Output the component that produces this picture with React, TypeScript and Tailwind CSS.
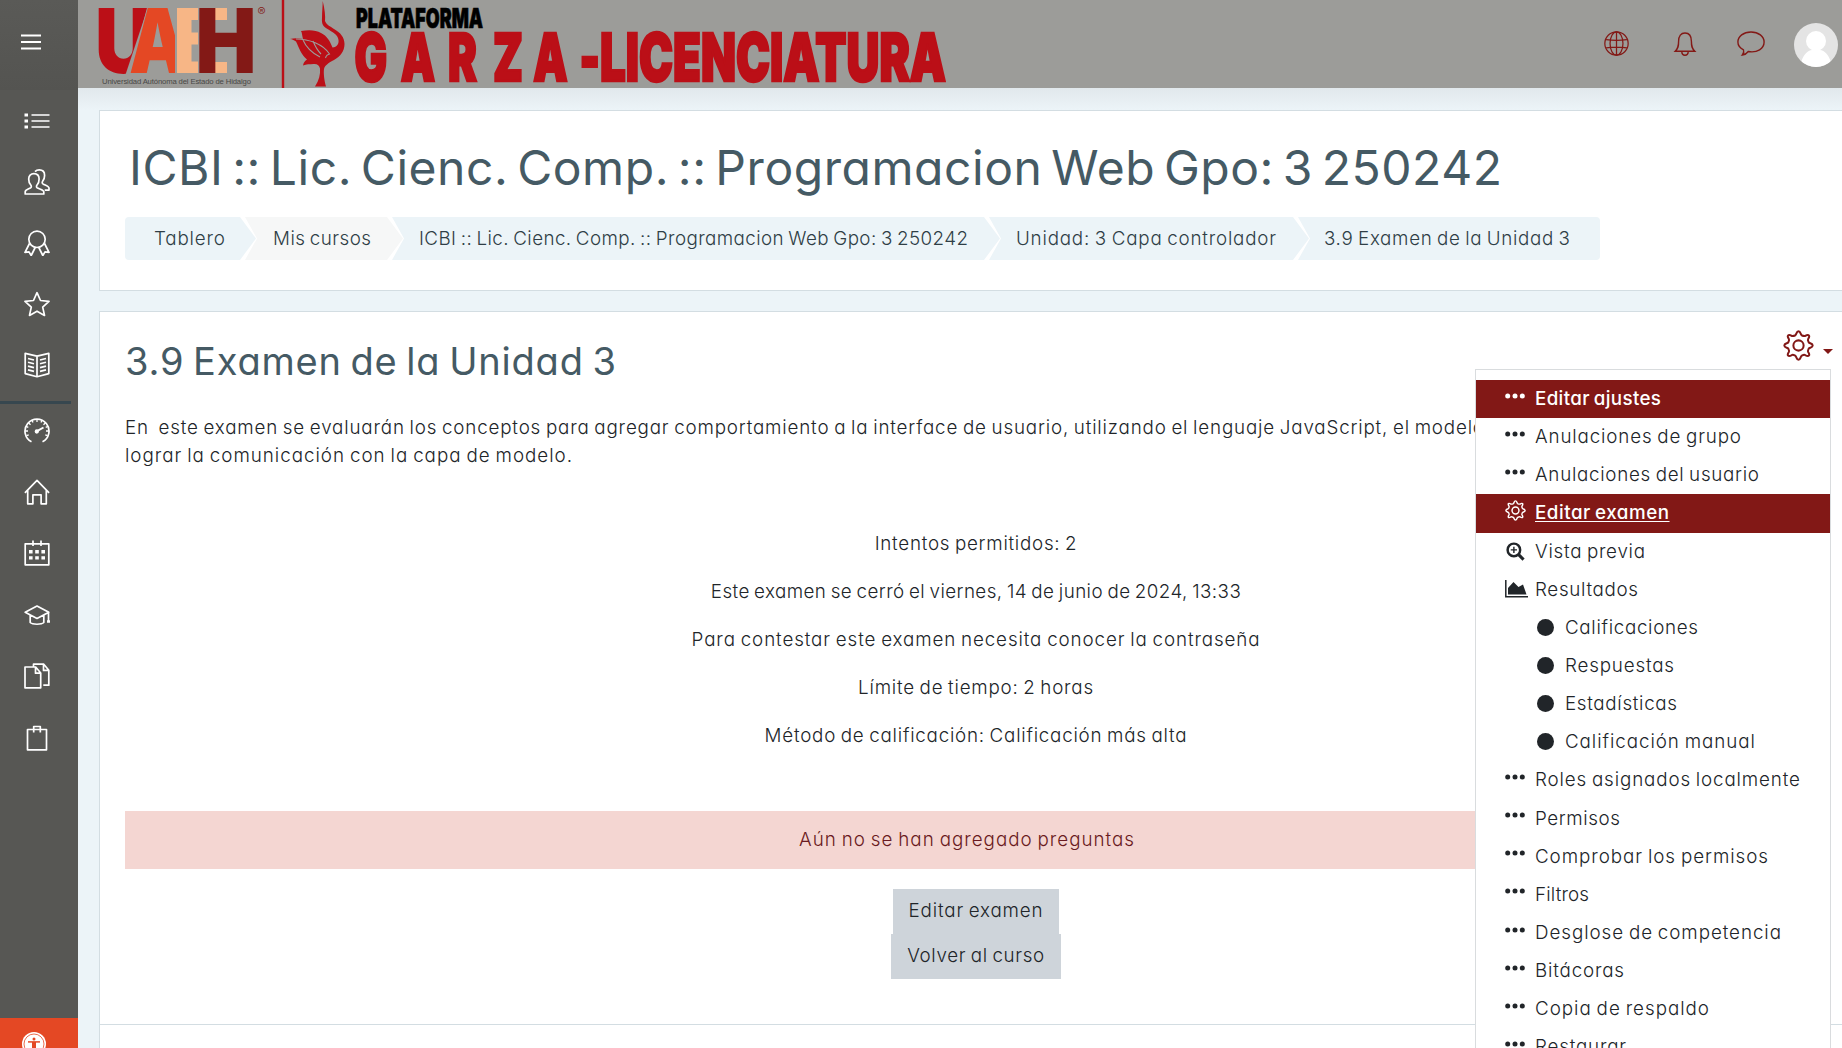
import { useLayoutEffect, useRef, useState, type ReactNode } from "react";

/* Text whose tracking is adjusted so that it spans exactly `w` pixels. */
function Fit({ w, children, className = "" }: { w: number; children: string; className?: string }) {
  const ref = useRef<HTMLSpanElement>(null);
  const [spacing, setSpacing] = useState(0);
  useLayoutEffect(() => {
    const el = ref.current;
    if (!el) return;
    el.style.letterSpacing = "0px";
    const natural = el.getBoundingClientRect().width;
    const s = (w - natural) / (children.length - 1);
    el.style.letterSpacing = `${s}px`;
    setSpacing(s);
  }, [w, children]);
  return (
    <span ref={ref} className={`inline-block whitespace-pre [word-spacing:-0.07em] ${className}`} style={{ letterSpacing: spacing }}>
      {children}
    </span>
  );
}

function Icon({ children, className = "size-[26px]", sw = 1.7 }: { children: ReactNode; className?: string; sw?: number }) {
  return (
    <svg viewBox="0 0 26 26" className={`shrink-0 ${className}`} fill="none" stroke="currentColor" strokeWidth={sw} strokeLinejoin="round">
      {children}
    </svg>
  );
}

const gearPath =
  "M13 1.100C14.800 1.100 14.700 3.800 15.600 4.400C16.600 4.900 17.600 5.400 18.600 5C19.900 4.200 20.900 3.700 21.700 4.500C22.500 5.300 21.900 6.300 21.100 7.500C20.500 8.500 21.200 9.500 21.600 10.400C22.200 11.300 24.900 11.200 24.900 13C24.900 14.800 22.200 14.700 21.600 15.600C21.200 16.500 20.500 17.500 21.100 18.500C21.900 19.700 22.500 20.700 21.700 21.500C20.900 22.300 19.900 21.800 18.600 21C17.600 20.500 16.600 21.100 15.600 21.600C14.700 22.200 14.800 24.900 13 24.900C11.200 24.900 11.300 22.200 10.400 21.600C9.400 21.100 8.400 20.500 7.400 21C6.100 21.800 5.100 22.300 4.300 21.500C3.500 20.700 4.100 19.700 4.900 18.500C5.500 17.500 4.800 16.500 4.400 15.600C3.800 14.700 1.100 14.800 1.100 13C1.100 11.200 3.800 11.300 4.400 10.400C4.800 9.500 5.500 8.500 4.900 7.500C4.100 6.300 3.500 5.300 4.300 4.500C5.100 3.700 6.100 4.200 7.400 5C8.400 5.400 9.400 4.900 10.400 4.400C11.300 3.800 11.200 1.100 13 1.100Z";

function Gear({ className, sw }: { className: string; sw: number }) {
  return (
    <Icon className={className} sw={sw}>
      <path d={gearPath} />
      <circle cx="13" cy="13" r="4.300" />
    </Icon>
  );
}

const navTop: ReactNode[] = [
  <Icon key="list">
    <path d="M.5 7h3.500M.5 13h3.500M.5 19h3.500" strokeWidth="3" />
    <path d="M7.500 7h18M7.500 13h18M7.500 19h18" />
  </Icon>,
  <Icon key="users">
    <path d="M1.200 25v-2.200c0-2 3-2.600 5.500-4 1-.7.7-2-.1-3C5 14 4.700 12 4.700 10c0-3.300 2-5.400 5.200-5.400s5.200 2.100 5.200 5.400c0 2-.3 4-1.900 5.800-.8 1-1.100 2.300-.1 3 2.500 1.400 6.700 2 6.700 4V25z" />
    <path d="M11 2.600C12 1.500 13.500.900 15.300.900c3.300 0 5.300 2.300 5.300 5.500 0 2-.4 3.600-1.800 5.500-.8 1.200-.9 2.300.2 3 2.400 1.400 6 2.200 6 4.200v2h-4.300" />
  </Icon>,
  <Icon key="award">
    <circle cx="13" cy="9.300" r="8.200" />
    <path d="M5.500 13.500 1 22.300l4-.4 2.200 3.600 4-8M20.500 13.500l4.500 8.800-4-.4-2.200 3.600-4-8" />
  </Icon>,
  <Icon key="star">
    <path d="m13 1.700 3.500 7.800 8.500.9-6.300 5.700 1.800 8.300-7.500-4.200-7.500 4.200 1.800-8.300L1 10.400l8.500-.9z" />
  </Icon>,
  <Icon key="book">
    <path d="M13 4.200 1.200 1.300v20.300L13 24.700l11.800-3.100V1.300zM13 4.200v20.500" />
    <path d="m4 6.500 6 1.500M4 10.300l6 1.500M4 14.100l6 1.500M4 17.900l6 1.500M22 6.500 16 8M22 10.300l-6 1.500M22 14.100l-6 1.500M22 17.900l-6 1.500" />
  </Icon>,
];

const navBottom: ReactNode[] = [
  <Icon key="gauge">
    <path d="M7.500 23.800A12 12 0 1 1 18.500 23.800" />
    <path d="M13 1v3M1 13h3M25 13h-3M4.500 4.800l2 2M21.500 4.800l-2 2M8 2.200l1 2.300M18 2.200l-1 2.300M2 8.300l2.300 1M24 8.300l-2.300 1M2.500 17.700l2.200-.9M23.500 17.700l-2.200-.9" strokeWidth="1.300" />
    <path d="m13 13.200 6.500-3.700" strokeWidth="2" />
    <circle cx="12.800" cy="13.500" r="1.300" fill="currentColor" />
  </Icon>,
  <Icon key="home">
    <path d="M.9 13.800 13 1.400l12.100 12.400M3.700 11.500v13.300h5.200v-9h8.200v9h5.200V11.500" />
  </Icon>,
  <Icon key="calendar">
    <path d="M1.200 3.800h23.600v21H1.200zM9 .5v5.500M17 .5v5.500" />
    <path d="M5 11.700h3.600M11.200 11.700h3.600M17.400 11.700H21M5 17.900h3.600M11.200 17.900h3.600M17.400 17.900H21" strokeWidth="3.400" />
  </Icon>,
  <Icon key="cap">
    <path d="M13 4 1.200 10.300 13 16.500l11.800-6.200zM6.200 13v7.500c2.200 2.300 11.400 2.300 13.600 0V13M24.500 10.500v9" />
    <path d="M23 19.500h3" strokeWidth="2.500" />
  </Icon>,
  <Icon key="docs">
    <path d="M1 4h10.700l5 6v14.800H1zM11.500 4v6.200h5.200M9.500 3.500V1.200h10.300l5 6v15h-5.500M19.500 1.200v6.200h5.200" />
  </Icon>,
  <Icon key="clipboard">
    <path d="M3.500 4.500h19v20.300h-19zM9.700 7.500v-6h6.600v6" />
  </Icon>,
];

function Logo() {
  return (
    <svg viewBox="78 0 880 88" className="h-[88px] w-[880px] shrink-0" fontFamily="Inter, sans-serif">
      <g fontWeight="900" fontSize="89">
        <text x="95" y="73" fill="#bb0f17" textLength="57" lengthAdjust="spacingAndGlyphs">U</text>
        <path d="M151 6 128 75" stroke="#9c9c99" strokeWidth="5" />
        <path d="M150 8h14v10h-14z" fill="#e44824" />
        <text x="129" y="73" fill="#e44824" stroke="#9c9c99" strokeWidth="2" paintOrder="stroke" textLength="58" lengthAdjust="spacingAndGlyphs">A</text>
        <path d="M176 0v80" stroke="#9c9c99" strokeWidth="2" />
        <path d="M177 8h21v65h-21zM215 8h12v12h-12zM215 62h12v11h-12z" fill="#f7b686" />
        <path d="M191.500 20h7v12.500h-7zM191.500 44.500h7v17h-7z" fill="#9c9c99" />
        <text x="195.500" y="73" fill="#831916" textLength="61" lengthAdjust="spacingAndGlyphs">H</text>
      </g>
      <text x="257.500" y="16" fontSize="12" fill="#831916">®</text>
      <text x="102" y="84" fontSize="7.700" fill="#484846" fontFamily="Liberation Sans, sans-serif" textLength="149">Universidad Autónoma del Estado de Hidalgo</text>
      <path d="M283 0v88" stroke="#bb0f17" strokeWidth="2.400" />
      <g fill="#bb0f17">
        <path d="M322.700 1c2 8 2.800 15 2.300 20 1.500 4 5 5 9 8 6.500 3.500 10.500 8.500 10.500 15 0 7-4 12.500-10.500 16-5.500 3-9 5-10 9-.6 4 .3 12 2 17.500h-11c4-6 5.500-12 5-18-.5-3-3-5-6.500-4.500-4 .4-7 0-10.500 1.500.4-2.500 1.500-4.500 4-6-6-5-8-12-11-18-1.500-1.200-3.500-2.200-6-2.500 4-1 8-1 13 0-1-3.500-.8-6-2-8 8-1.500 15-1 20 2 6 3 9 8 11.500 14.500 4.500-.5 6.500-3.500 6-7.500-.7-6-6.500-8-11-11-4.500-2.700-6-5-5.500-11 .1-7 .7-12 .7-17z" />
        <path d="M296 39c13 0 27 5 33.500 15-4 1-3 2-4 4M303 40c3 7 7 12 17 17M313 41c2 5 5 10 8 13" fill="none" stroke="#9c9c99" strokeWidth="1.100" />
      </g>
      <g fontWeight="900">
        <text x="356" y="27.500" fontSize="27.500" stroke="#000" strokeWidth=".7" textLength="127" lengthAdjust="spacingAndGlyphs">PLATAFORMA</text>
        <g fill="#bb0f17" stroke="#bb0f17" strokeWidth="2.600" fontSize="66.500">
          <text transform="translate(354.500 80.800) scale(.65 1)" x="0 71 144 213 275 346">GARZA-</text>
          <text x="600" y="80.800" textLength="346" lengthAdjust="spacingAndGlyphs">LICENCIATURA</text>
        </g>
      </g>
    </svg>
  );
}

const Dots = () => (
  <svg viewBox="0 0 20 6" className="-mt-[7px] h-[6px] w-[20px]" fill="currentColor">
    <circle cx="2.700" cy="3" r="2.500" />
    <circle cx="10" cy="3" r="2.500" />
    <circle cx="17.300" cy="3" r="2.500" />
  </svg>
);

type Item = { t: string; w: number; icon?: "gear" | "zoom" | "chart"; sub?: boolean; on?: boolean; underline?: boolean };
const items: Item[] = [
  { t: "Editar ajustes", w: 126, on: true },
  { t: "Anulaciones de grupo", w: 206 },
  { t: "Anulaciones del usuario", w: 224 },
  { t: "Editar examen", w: 134, icon: "gear", on: true, underline: true },
  { t: "Vista previa", w: 110, icon: "zoom" },
  { t: "Resultados", w: 103, icon: "chart" },
  { t: "Calificaciones", w: 133, sub: true },
  { t: "Respuestas", w: 109, sub: true },
  { t: "Estadísticas", w: 112, sub: true },
  { t: "Calificación manual", w: 190, sub: true },
  { t: "Roles asignados localmente", w: 265 },
  { t: "Permisos", w: 85 },
  { t: "Comprobar los permisos", w: 233 },
  { t: "Filtros", w: 54 },
  { t: "Desglose de competencia", w: 246 },
  { t: "Bitácoras", w: 89 },
  { t: "Copia de respaldo", w: 174 },
  { t: "Restaurar", w: 91 },
];

function ItemIcon({ item }: { item: Item }) {
  if (item.sub) return <span className="-mt-[1px] size-[17px] rounded-full bg-[#212529]" />;
  if (item.icon === "gear") return <Gear className="-mt-[5px] size-[21px]" sw={1.8} />;
  if (item.icon === "zoom")
    return (
      <svg viewBox="0 0 20 20" className="-mt-[1px] ml-[1px] size-[19px]" fill="none" stroke="currentColor" strokeWidth="2.600">
        <circle cx="8.300" cy="8.300" r="6.600" />
        <path d="m13 13 5.500 5.500" strokeWidth="3.200" />
        <path d="M8.300 5v6.600M5 8.300h6.600" strokeWidth="1.500" />
      </svg>
    );
  if (item.icon === "chart")
    return (
      <svg viewBox="0 0 23 18" className="-mt-[2px] h-[18px] w-[23px]">
        <path d="M.8 0v16.700H23" fill="none" stroke="currentColor" strokeWidth="1.500" />
        <path d="M3 14.500V8l5.500-6 5 5L18 4.500l3.500 10z" fill="currentColor" />
      </svg>
    );
  return <Dots />;
}

function Menu() {
  return (
    <div className="absolute top-[369px] left-[1475px] h-[700px] w-[356px] border border-[#d9dcde] bg-white pt-[10px] text-[#212529]">
      {items.map((it) => (
        <div
          key={it.t}
          className={`flex h-[38.150px] items-center ${it.sub ? "pl-[61px]" : "pl-[29px]"} ${it.on ? "bg-[#821816] font-medium text-white" : ""}`}
        >
          <span className={`flex items-center ${it.sub ? "w-[28px]" : "w-[30px]"}`}>
            <ItemIcon item={it} />
          </span>
          <Fit w={it.w} className={it.underline ? "underline underline-offset-2" : ""}>
            {it.t}
          </Fit>
        </div>
      ))}
    </div>
  );
}

const crumbs = [
  { t: "Tablero", w: 71, box: "w-[131px] pl-[29px] bg-[#ecf4f8] [clip-path:polygon(0_0,115px_0,100%_50%,115px_100%,0_100%)]" },
  { t: "Mis cursos", w: 98, box: "w-[158px] pl-[28px] bg-[#f6f7f7] [clip-path:polygon(0_0,142px_0,100%_50%,142px_100%,0_100%,12px_50%)]" },
  { t: "ICBI :: Lic. Cienc. Comp. :: Programacion Web Gpo: 3 250242", w: 549, box: "w-[608px] pl-[27px] bg-[#ecf4f8] [clip-path:polygon(0_0,592px_0,100%_50%,592px_100%,0_100%,12px_50%)]" },
  { t: "Unidad: 3 Capa controlador", w: 260, box: "w-[320px] pl-[27px] bg-[#ecf4f8] [clip-path:polygon(0_0,304px_0,100%_50%,304px_100%,0_100%,12px_50%)]" },
  { t: "3.9 Examen de la Unidad 3", w: 246, box: "w-[305px] pl-[26px] bg-[#ecf4f8] [clip-path:polygon(0_0,100%_0,100%_100%,0_100%,12px_50%)]" },
];

const info = [
  { t: "Intentos permitidos: 2", w: 202 },
  { t: "Este examen se cerró el viernes, 14 de junio de 2024, 13:33", w: 530 },
  { t: "Para contestar este examen necesita conocer la contraseña", w: 568 },
  { t: "Límite de tiempo: 2 horas", w: 235 },
  { t: "Método de calificación: Calificación más alta", w: 422 },
];

export default function App() {
  return (
    <div className="relative flex h-[1048px] w-[1842px] overflow-hidden bg-[#ecf4f8] font-['Inter',sans-serif] text-[18.800px] leading-[28px] font-[350] text-[#212529] [font-feature-settings:'cv11']">
      <aside className="flex w-[78px] shrink-0 flex-col bg-[#575754] text-white">
        <div className="flex h-[90px] items-center bg-gradient-to-b from-[#5a5a57] to-[#545451] pb-[7px] pl-[21px]">
          <svg viewBox="0 0 20 16" className="h-4 w-5" stroke="currentColor" strokeWidth="2">
            <path d="M0 1.500h20M0 8h20M0 14.500h20" />
          </svg>
        </div>
        <nav className="flex w-[75px] flex-col pr-[1px]">
          {navTop.map((icon, i) => (
            <div key={i} className="flex h-[61.200px] items-center justify-center">{icon}</div>
          ))}
        </nav>
        <div className="mt-[5px] -mb-1 h-[3px] w-[71px] bg-[#37474f]" />
        <nav className="flex w-[75px] flex-1 flex-col pr-[1px]">
          {navBottom.map((icon, i) => (
            <div key={i} className="flex h-[61.400px] items-center justify-center">{icon}</div>
          ))}
        </nav>
        <div className="flex h-[30px] items-start bg-[#e44824] pt-[14px] pl-[22px]">
          <svg viewBox="0 0 24 24" className="size-6 shrink-0">
            <circle cx="12" cy="12" r="12" fill="#fff" />
            <circle cx="12" cy="12" r="10" fill="none" stroke="#e44824" strokeWidth=".8" />
            <circle cx="12" cy="7" r="1.500" fill="#e44824" />
            <path d="M6 9.900h12" stroke="#e44824" strokeWidth="1.500" />
            <path d="M10 10h4v10h-1.300v-4h-1.400v4H10z" fill="#e44824" />
          </svg>
        </div>
      </aside>

      <div className="flex flex-1 flex-col overflow-hidden">
        <header className="flex h-[88px] shrink-0 items-center bg-[#9c9c99] text-[#831916]">
          <Logo />
          <div className="ml-auto flex h-full items-center pr-1">
            <svg viewBox="0 0 24 24" className="mr-[44px] -mt-[2px] size-[25px]" fill="none" stroke="currentColor" strokeWidth="1.200">
              <circle cx="12" cy="12" r="11.200" />
              <ellipse cx="12" cy="12" rx="6.200" ry="11.200" />
              <path d="M12 .8v22.400M2 8.300c6 .9 14 .9 20 0M2 16.300c6-.9 14-.9 20 0" />
            </svg>
            <svg viewBox="0 0 24 26" className="mr-[40px] h-[26px] w-6" fill="none" stroke="currentColor" strokeWidth="1.400">
              <path d="M2.200 20.300c3-3 3.400-5 3.400-10C5.600 5 8 2 12 2s6.400 3 6.400 8.300c0 5 .4 7 3.400 10zM8.800 20.500c0 5 6.400 5 6.400 0" />
            </svg>
            <svg viewBox="0 0 28 25" className="mr-[29px] -mt-[2px] h-[25px] w-7" fill="none" stroke="currentColor" strokeWidth="1.400">
              <path d="M14 1C6.500 1 .9 5.300.9 11c0 3.300 1.900 6 5.600 7.900.8 2.200.2 3.500-1.200 5.100 3.300-.3 4.700-1.800 6-3.500 9 1.600 15.800-3 15.800-9.500C27.100 5.300 21.500 1 14 1z" />
            </svg>
            <svg viewBox="0 0 44 44" className="mt-[2px] size-11 rounded-full bg-[#e4e4e4]" fill="#fff">
              <circle cx="22" cy="18" r="10" />
              <path d="M6 44c2-12 8-17 12-17h8c4 0 10 5 12 17z" />
            </svg>
          </div>
        </header>
        <div className="h-[22px] shrink-0 bg-gradient-to-b from-[#e1e8ec] to-[#ecf4f8]" />

        <main className="ml-[21px] flex flex-1 flex-col">
          <section className="h-[181px] shrink-0 border-y border-l border-[#d3dde2] bg-white pl-[25px]">
            <h1 className="pt-[29px] pl-[4px] text-[48px] leading-[56px] font-[380] text-[#455a64]">
              <Fit w={1373} className="[word-spacing:-0.11em]">ICBI :: Lic. Cienc. Comp. :: Programacion Web Gpo: 3 250242</Fit>
            </h1>
            <nav className="mt-[21px] flex h-[43px] w-[1475px] overflow-hidden rounded-[4px] text-[#2f3e46]">
              {crumbs.map((c, i) => (
                <div key={i} className={`flex shrink-0 items-center ${i ? "-ml-[11px]" : ""} ${c.box}`}>
                  <Fit w={c.w}>{c.t}</Fit>
                </div>
              ))}
            </nav>
          </section>

          <section className="mt-5 flex h-[714px] shrink-0 flex-col border-y border-l border-[#d3dde2] bg-white pl-[25px]">
            <div className="flex items-start">
              <h2 className="pt-[24px] text-[38px] leading-[50px] font-[370] text-[#455a64]">
                <Fit w={491}>3.9 Examen de la Unidad 3</Fit>
              </h2>
              <div className="mt-[18px] mr-[9px] ml-auto flex items-center text-[#821816]">
                <Gear className="size-[31px]" sw={1.7} />
                <span className="mt-3 ml-[9px] border-x-[5px] border-t-[5px] border-x-transparent border-t-current" />
              </div>
            </div>
            <p className="mt-[28px] flex w-[1717px] flex-col items-start overflow-hidden">
              <Fit w={1359}>{"En  este examen se evaluarán los conceptos para agregar comportamiento a la interface de usuario, utilizando el lenguaje JavaScript, el modelo"}</Fit>
              <Fit w={447}>lograr la comunicación con la capa de modelo.</Fit>
            </p>
            <div className="mt-[60px] flex w-[1702px] flex-col items-center gap-5">
              {info.map((l) => (
                <Fit key={l.t} w={l.w}>{l.t}</Fit>
              ))}
            </div>
            <div className="mt-[61px] flex h-[58px] w-[1684px] shrink-0 items-center justify-center bg-[#f4d6d2] text-[#6a1a21]">
              <Fit w={335}>Aún no se han agregado preguntas</Fit>
            </div>
            <div className="mt-5 flex w-[1702px] flex-col items-center">
              <button className="flex h-[45px] w-[166px] items-center justify-center bg-[#ced4da] pb-[2px]">
                <Fit w={134}>Editar examen</Fit>
              </button>
              <button className="flex h-[45px] w-[170px] items-center justify-center bg-[#ced4da] pb-[2px]">
                <Fit w={137}>Volver al curso</Fit>
              </button>
            </div>
          </section>
          <section className="flex-1 border-l border-[#d3dde2] bg-white" />
        </main>
      </div>
      <Menu />
    </div>
  );
}
